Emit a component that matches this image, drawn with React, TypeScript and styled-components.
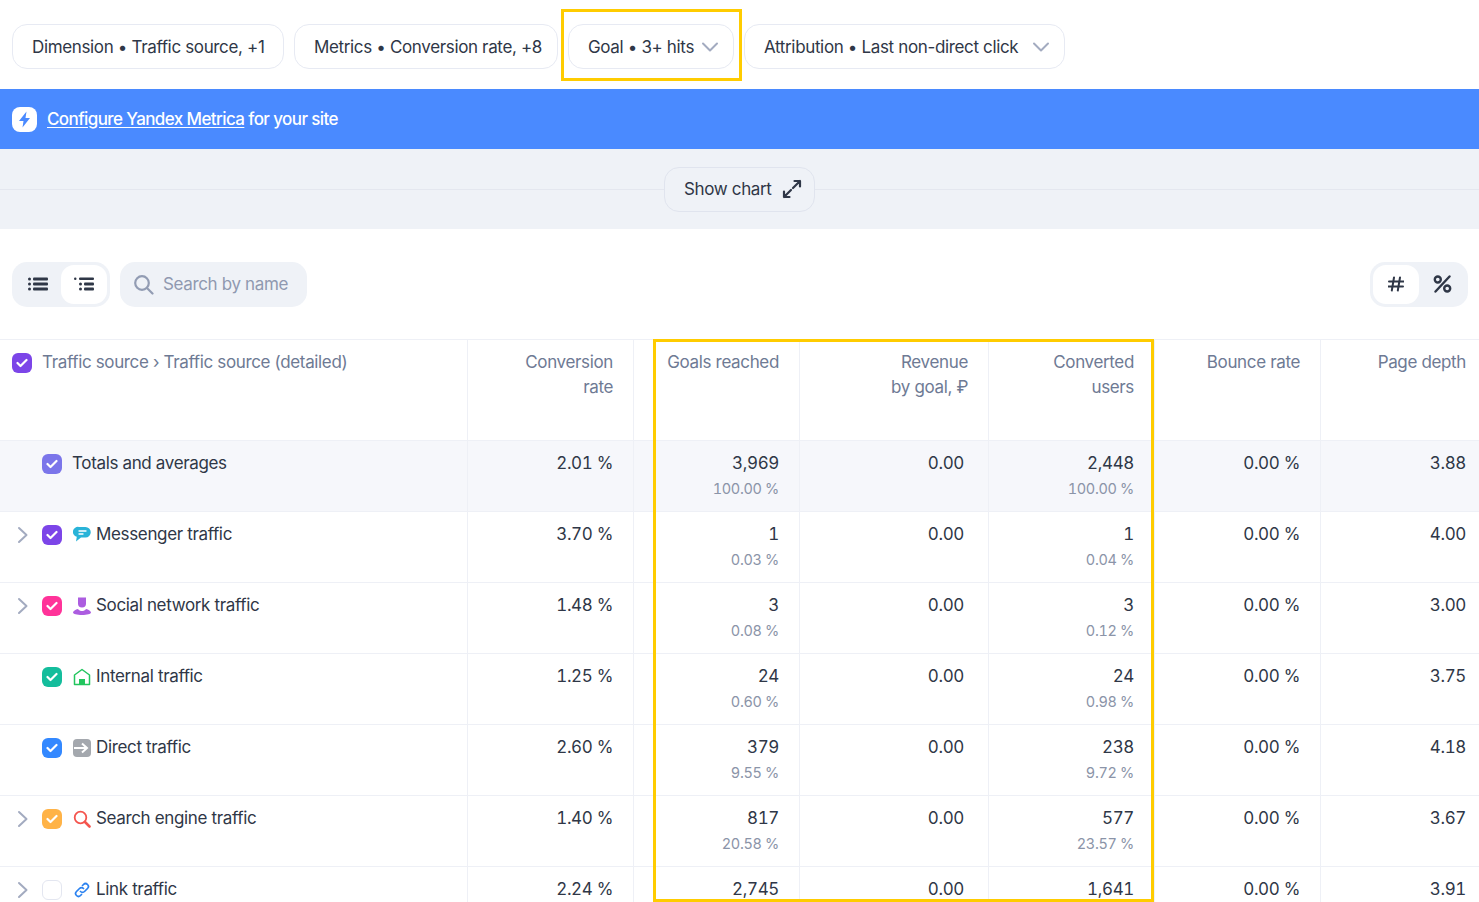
import styled, { createGlobalStyle } from "styled-components";
import type { ReactNode } from "react";

// style
const GlobalStyle = createGlobalStyle`
  html, body {
    margin: 0;
    padding: 0;
    background: #fff;
    overflow: hidden;
  }
  * {
    box-sizing: border-box;
  }
`;
const Page = styled.div`
  position: relative;
  width: 1479px;
  height: 902px;
  overflow: hidden;
  font-family: Inter, "Liberation Sans", sans-serif;
  font-size: 17px;
  letter-spacing: -0.35px;
  color: #2f3747;
`;
const FilterBar = styled.div`
  display: flex;
  gap: 10px;
  height: 89px;
  padding: 24px 0 0 12px;
`;
const FilterButton = styled.button<{ $width: number }>`
  display: flex;
  align-items: center;
  justify-content: space-between;
  width: ${(p) => p.$width}px;
  height: 45px;
  padding: 0 14px 0 19px;
  background: #fff;
  border: 1.5px solid #e7eaf3;
  border-radius: 15px;
  font: inherit;
  letter-spacing: inherit;
  color: inherit;
  white-space: nowrap;
`;
const Banner = styled.div`
  display: flex;
  align-items: center;
  gap: 10px;
  height: 60px;
  padding-left: 12px;
  background: #4a8aff;
  color: #fff;
  font-weight: 500;
  letter-spacing: -0.6px;
`;
const BannerLink = styled.a`
  text-decoration: underline;
  text-underline-offset: 2px;
`;
const ChartBand = styled.div`
  display: flex;
  align-items: center;
  justify-content: center;
  height: 80px;
  background: linear-gradient(#e4e7ef, #e4e7ef) center / 100% 1px no-repeat #eff2f7;
`;
const ChartButton = styled.button`
  display: flex;
  align-items: center;
  gap: 10px;
  height: 45px;
  width: 151px;
  padding: 0 12px 0 19px;
  background: #eff2f7;
  border: 1.5px solid #e0e4ee;
  border-radius: 15px;
  font: inherit;
  letter-spacing: inherit;
  color: inherit;
  white-space: nowrap;
`;
const Toolbar = styled.div`
  display: flex;
  align-items: center;
  justify-content: space-between;
  height: 110px;
  padding: 0 11px 0 12px;
`;
const ToolGroup = styled.div`
  display: flex;
  gap: 10px;
`;
const Segmented = styled.div`
  display: flex;
  height: 45px;
  padding: 3px;
  background: #eff2f7;
  border-radius: 15px;
`;
const Segment = styled.div<{ $active?: boolean }>`
  display: flex;
  align-items: center;
  justify-content: center;
  width: 46px;
  border-radius: 13px;
  background: ${(p) => (p.$active ? "#fff" : "transparent")};
`;
const SearchBox = styled.div`
  display: flex;
  align-items: center;
  gap: 9px;
  width: 187px;
  height: 45px;
  padding-left: 13px;
  background: #eff2f7;
  border-radius: 15px;
  color: #8f99b0;
`;
const Table = styled.div`
  border-top: 1px solid #eef0f6;
`;
const Row = styled.div<{ $height: number; $total?: boolean }>`
  display: grid;
  grid-template-columns: 467px 166px 166px 189px 166px 166px 159px;
  height: ${(p) => p.$height}px;
  background: ${(p) => (p.$total ? "#f6f7fb" : "#fff")};
  border-bottom: 1px solid #eef0f6;
`;
const HeadCell = styled.div`
  padding: 10px 20px 0 0;
  text-align: right;
  line-height: 25px;
  color: #6e7a94;
  border-left: 1px solid #eef0f6;
  &:last-child {
    padding-right: 13px;
  }
`;
const NameHead = styled.div`
  display: flex;
  align-items: flex-start;
  gap: 10px;
  padding: 10px 0 0 12px;
  line-height: 25px;
  color: #6e7a94;
`;
const NameCell = styled.div`
  display: flex;
  align-items: flex-start;
  padding: 10px 0 0 17px;
  line-height: 25px;
`;
const Expander = styled.div`
  display: flex;
  width: 25px;
  height: 25px;
  align-items: center;
`;
const SourceIcon = styled.div`
  display: flex;
  align-items: center;
  justify-content: center;
  width: 20px;
  height: 25px;
  margin: 0 4px 0 10px;
`;
const Check = styled.div<{ $color?: string }>`
  display: flex;
  flex: none;
  align-items: center;
  justify-content: center;
  width: 20px;
  height: 20px;
  margin-top: 3px;
  border-radius: 6px;
  background: ${(p) => p.$color ?? "#fff"};
  border: ${(p) => (p.$color ? "none" : "1.5px solid #e3e6f0")};
`;
const TotalLabel = styled.span`
  margin-left: 10px;
`;
const ValueCell = styled.div<{ $inset?: number }>`
  padding: 10px ${(p) => p.$inset ?? 20}px 0 0;
  text-align: right;
  border-left: 1px solid #eef0f6;
  line-height: 25px;
  font-variant-numeric: tabular-nums;
`;
const Share = styled.div`
  margin-top: 1px;
  font-size: 14.5px;
  line-height: 24px;
  color: #8b94a8;
`;
const Highlight = styled.div`
  position: absolute;
  border: 3px solid #ffcc00;
  pointer-events: none;
`;
const GoalHighlight = styled(Highlight)`
  left: 561px;
  top: 9px;
  width: 181px;
  height: 72px;
`;
const ColumnsHighlight = styled(Highlight)`
  left: 653px;
  top: 339px;
  width: 501px;
  height: 563px;
`;

// icons
const Chevron = () => (
  <svg width="18" height="12" viewBox="0 0 18 12" fill="none">
    <path d="M2 2.5l7 7 7-7" stroke="#a3abc0" strokeWidth="2" strokeLinecap="round" strokeLinejoin="round" />
  </svg>
);
const RowChevron = () => (
  <svg width="12" height="18" viewBox="0 0 12 18" fill="none">
    <path d="M2 2l7.5 7L2 16" stroke="#a3abc0" strokeWidth="2" strokeLinecap="round" strokeLinejoin="round" />
  </svg>
);
const Tick = () => (
  <svg width="12" height="10" viewBox="0 0 12 10" fill="none">
    <path d="M1.5 5l3 3 6-6" stroke="#fff" strokeWidth="2.2" strokeLinecap="round" strokeLinejoin="round" />
  </svg>
);
const Expand = () => (
  <svg width="20" height="20" viewBox="0 0 20 20" fill="none">
    <path
      d="M11 9l7-7M12.5 2H18v5.5M9 11l-7 7M2 12.5V18h5.5"
      stroke="#2f3747"
      strokeWidth="2.2"
      strokeLinecap="round"
      strokeLinejoin="round"
    />
  </svg>
);
const Bolt = () => (
  <svg width="25" height="25" viewBox="0 0 25 25">
    <rect width="25" height="25" rx="8" fill="#fff" />
    <path d="M14.5 4.5L7 14h4.5l-1 6.5L18 11h-4.5z" fill="#4a8aff" />
  </svg>
);
const FlatList = () => (
  <svg width="20" height="14" viewBox="0 0 20 14" fill="#2f3747">
    <rect x="0" y="0.5" width="3" height="3" rx="1.5" />
    <rect x="0" y="5.5" width="3" height="3" rx="1.5" />
    <rect x="0" y="10.5" width="3" height="3" rx="1.5" />
    <rect x="5" y="0.5" width="15" height="3" rx="1" />
    <rect x="5" y="5.5" width="15" height="3" rx="1" />
    <rect x="5" y="10.5" width="15" height="3" rx="1" />
  </svg>
);
const TreeList = () => (
  <svg width="20" height="14" viewBox="0 0 20 14" fill="#2f3747">
    <rect x="0" y="0.5" width="2.5" height="2.5" rx="1.2" />
    <rect x="5" y="5.5" width="3" height="3" rx="1.5" />
    <rect x="5" y="10.5" width="3" height="3" rx="1.5" />
    <rect x="5" y="0.5" width="15" height="2.5" rx="1" />
    <rect x="10" y="5.5" width="10" height="3" rx="1" />
    <rect x="10" y="10.5" width="10" height="3" rx="1" />
  </svg>
);
const Magnifier = () => (
  <svg width="21" height="21" viewBox="0 0 21 21" fill="none">
    <circle cx="9" cy="9" r="6.8" stroke="#929cb3" strokeWidth="2.2" />
    <path d="M14 14l5.5 5.5" stroke="#929cb3" strokeWidth="2.2" strokeLinecap="round" />
  </svg>
);
const Hash = () => (
  <svg width="16" height="16" viewBox="0 0 16 16" fill="none" stroke="#2f3747" strokeWidth="2" strokeLinecap="round">
    <path d="M6 1.5L3.8 14.5M12 1.5L9.8 14.5M1 5.5h14.5M.5 10.5H15" />
  </svg>
);
const Percent = () => (
  <svg width="19" height="18" viewBox="0 0 19 18" fill="none" stroke="#2f3747" strokeWidth="2.4" strokeLinecap="round">
    <circle cx="4.8" cy="4.5" r="3" />
    <circle cx="14.2" cy="13.5" r="3" />
    <path d="M16.5 1.5L2.5 16.5" />
  </svg>
);
const Bubble = () => (
  <svg width="18" height="17" viewBox="0 0 18 17">
    <path d="M6 1h6.5a5 5 0 010 10.500H8L3 15.500l.8-4.700A5 5 0 016 1z" fill="#29b3d8" />
    <path d="M6 5h7M6 8h4" stroke="#fff" strokeWidth="1.3" strokeLinecap="round" />
  </svg>
);
const Person = () => (
  <svg width="20" height="20" viewBox="0 0 20 20" fill="#ac5de0">
    <path d="M6 1.500h8v6a4 4 0 01-8 0z" />
    <path d="M1 16.500c0-1.500 2.500-3 5-3.500 1 1.500 2.500 2 4 2s3-.5 4-2c2.500.5 5 2 5 3.500 0 1.500-4 2.500-9 2.500s-9-1-9-2.500z" />
  </svg>
);
const House = () => (
  <svg width="18" height="18" viewBox="0 0 18 18" fill="none">
    <path d="M1.500 16.500V7L9 1.500 16.500 7v9.500z" stroke="#22c55e" strokeWidth="1.500" strokeLinejoin="round" />
    <rect x="6" y="11" width="6" height="6" fill="#22c55e" />
  </svg>
);
const ArrowBox = () => (
  <svg width="18" height="18" viewBox="0 0 18 18">
    <rect width="18" height="18" rx="4" fill="#a4a8ae" />
    <path d="M1 9h12M9 4.500L14 9l-5 4.500" fill="none" stroke="#fff" strokeWidth="2" />
  </svg>
);
const SearchGlass = () => (
  <svg width="18" height="18" viewBox="0 0 18 18" fill="none">
    <circle cx="7.500" cy="7.500" r="5.800" stroke="#f4554e" strokeWidth="1.800" />
    <path d="M12 12l4.500 4.500" stroke="#f4554e" strokeWidth="2.600" strokeLinecap="round" />
  </svg>
);
const ChainLink = () => (
  <svg width="16" height="16" viewBox="0 0 16 16" fill="none" stroke="#2b82f0" strokeWidth="1.700" strokeLinecap="round">
    <path d="M6.500 9.500a2.800 2.800 0 004 0l3-3a2.800 2.800 0 00-4-4l-1 1" />
    <path d="M9.500 6.500a2.800 2.800 0 00-4 0l-3 3a2.800 2.800 0 004 4l1-1" />
  </svg>
);

// content
const filters = [
  { text: "Dimension • Traffic source, +1", width: 272 },
  { text: "Metrics • Conversion rate, +8", width: 264 },
  { text: "Goal • 3+ hits", width: 166, chevron: true },
  { text: "Attribution • Last non-direct click", width: 321, chevron: true },
];

type DataRow = {
  name: string;
  color?: string;
  icon: ReactNode;
  expandable: boolean;
  rate: string;
  goals: string;
  goalsShare: string;
  users: string;
  usersShare?: string;
  depth: string;
};

const rows: DataRow[] = [
  { name: "Messenger traffic", color: "#7c45e8", icon: <Bubble />, expandable: true, rate: "3.70 %", goals: "1", goalsShare: "0.03 %", users: "1", usersShare: "0.04 %", depth: "4.00" },
  { name: "Social network traffic", color: "#ff3399", icon: <Person />, expandable: true, rate: "1.48 %", goals: "3", goalsShare: "0.08 %", users: "3", usersShare: "0.12 %", depth: "3.00" },
  { name: "Internal traffic", color: "#14bd9c", icon: <House />, expandable: false, rate: "1.25 %", goals: "24", goalsShare: "0.60 %", users: "24", usersShare: "0.98 %", depth: "3.75" },
  { name: "Direct traffic", color: "#3388ff", icon: <ArrowBox />, expandable: false, rate: "2.60 %", goals: "379", goalsShare: "9.55 %", users: "238", usersShare: "9.72 %", depth: "4.18" },
  { name: "Search engine traffic", color: "#ffb347", icon: <SearchGlass />, expandable: true, rate: "1.40 %", goals: "817", goalsShare: "20.58 %", users: "577", usersShare: "23.57 %", depth: "3.67" },
  { name: "Link traffic", icon: <ChainLink />, expandable: true, rate: "2.24 %", goals: "2,745", goalsShare: "", users: "1,641", depth: "3.91" },
];

const App = () => {
  return (
    <Page>
      <GlobalStyle />
      <FilterBar>
        {filters.map((f) => (
          <FilterButton key={f.text} $width={f.width}>
            <span>{f.text}</span>
            {f.chevron && <Chevron />}
          </FilterButton>
        ))}
      </FilterBar>
      <Banner>
        <Bolt />
        <span>
          <BannerLink>Configure Yandex Metrica</BannerLink> for your site
        </span>
      </Banner>
      <ChartBand>
        <ChartButton>
          Show chart
          <Expand />
        </ChartButton>
      </ChartBand>
      <Toolbar>
        <ToolGroup>
          <Segmented>
            <Segment>
              <FlatList />
            </Segment>
            <Segment $active>
              <TreeList />
            </Segment>
          </Segmented>
          <SearchBox>
            <Magnifier />
            Search by name
          </SearchBox>
        </ToolGroup>
        <Segmented>
          <Segment $active>
            <Hash />
          </Segment>
          <Segment>
            <Percent />
          </Segment>
        </Segmented>
      </Toolbar>
      <Table>
        <Row $height={101}>
          <NameHead>
            <Check $color="#7c45e8">
              <Tick />
            </Check>
            Traffic source › Traffic source (detailed)
          </NameHead>
          <HeadCell>
            Conversion
            <br />
            rate
          </HeadCell>
          <HeadCell>Goals reached</HeadCell>
          <HeadCell>
            Revenue
            <br />
            by goal, ₽
          </HeadCell>
          <HeadCell>
            Converted
            <br />
            users
          </HeadCell>
          <HeadCell>Bounce rate</HeadCell>
          <HeadCell>Page depth</HeadCell>
        </Row>
        <Row $height={71} $total>
          <NameCell>
            <Expander />
            <Check $color="#7b75ea">
              <Tick />
            </Check>
            <TotalLabel>Totals and averages</TotalLabel>
          </NameCell>
          <ValueCell>2.01 %</ValueCell>
          <ValueCell>
            3,969
            <Share>100.00 %</Share>
          </ValueCell>
          <ValueCell $inset={24}>0.00</ValueCell>
          <ValueCell>
            2,448
            <Share>100.00 %</Share>
          </ValueCell>
          <ValueCell>0.00 %</ValueCell>
          <ValueCell $inset={13}>3.88</ValueCell>
        </Row>
        {rows.map((r) => (
          <Row key={r.name} $height={71}>
            <NameCell>
              <Expander>{r.expandable && <RowChevron />}</Expander>
              <Check $color={r.color}>{r.color && <Tick />}</Check>
              <SourceIcon>{r.icon}</SourceIcon>
              {r.name}
            </NameCell>
            <ValueCell>{r.rate}</ValueCell>
            <ValueCell>
              {r.goals}
              {r.goalsShare && <Share>{r.goalsShare}</Share>}
            </ValueCell>
            <ValueCell $inset={24}>0.00</ValueCell>
            <ValueCell>
              {r.users}
              {r.usersShare && <Share>{r.usersShare}</Share>}
            </ValueCell>
            <ValueCell>0.00 %</ValueCell>
            <ValueCell $inset={13}>{r.depth}</ValueCell>
          </Row>
        ))}
      </Table>
      <GoalHighlight />
      <ColumnsHighlight />
    </Page>
  );
};

export default App;
